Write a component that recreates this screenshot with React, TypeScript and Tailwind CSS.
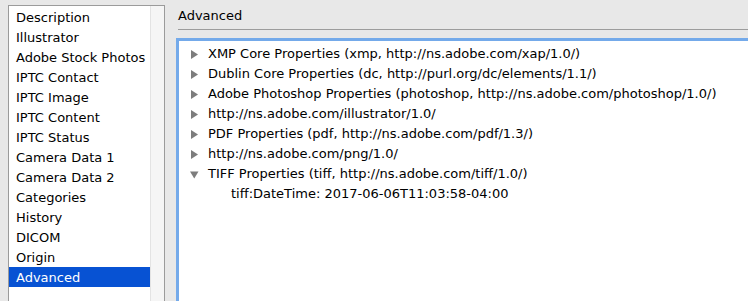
import { ReactNode } from 'react'

const categories = [
  'Description',
  'Illustrator',
  'Adobe Stock Photos',
  'IPTC Contact',
  'IPTC Image',
  'IPTC Content',
  'IPTC Status',
  'Camera Data 1',
  'Camera Data 2',
  'Categories',
  'History',
  'DICOM',
  'Origin',
  'Advanced',
]

const schemas = [
  { label: 'XMP Core Properties (xmp, http://ns.adobe.com/xap/1.0/)' },
  { label: 'Dublin Core Properties (dc, http://purl.org/dc/elements/1.1/)' },
  { label: 'Adobe Photoshop Properties (photoshop, http://ns.adobe.com/photoshop/1.0/)' },
  { label: 'http://ns.adobe.com/illustrator/1.0/' },
  { label: 'PDF Properties (pdf, http://ns.adobe.com/pdf/1.3/)' },
  { label: 'http://ns.adobe.com/png/1.0/' },
  {
    label: 'TIFF Properties (tiff, http://ns.adobe.com/tiff/1.0/)',
    open: true,
    children: ['tiff:DateTime: 2017-06-06T11:03:58-04:00'],
  },
]

function Disclosure({ open }: { open?: boolean }) {
  return (
    <svg width="9" height="9" viewBox="0 0 9 9" className="shrink-0">
      {open ? (
        <path d="M0 1.5h8.5L4.25 8.5z" fill="#7d7d7d" />
      ) : (
        <path d="M1 0v9l7-4.5z" fill="#7d7d7d" />
      )}
    </svg>
  )
}

function Row({ children, className = '' }: { children: ReactNode; className?: string }) {
  return <div className={`flex h-5 items-center whitespace-nowrap ${className}`}>{children}</div>
}

export default function App() {
  const selected = 'Advanced'

  return (
    <div
      className="flex h-[301px] w-[748px] overflow-hidden bg-[#e8e8e8] text-[13px] text-black"
      style={{ fontFamily: '"DejaVu Sans", "Liberation Sans", sans-serif' }}
    >
      <div className="ml-[8px] mt-[5px] flex w-[157px] shrink-0 border border-b-0 border-[#9b9b9b] bg-white">
        <div className="w-[141px] pt-[1px]">
          {categories.map((c) => (
            <Row
              key={c}
              className={
                c === selected
                  ? 'bg-[#0752d3] pl-[7px] pt-[2px] text-white'
                  : 'pl-[7px] pt-[2px]'
              }
            >
              {c}
            </Row>
          ))}
        </div>
        <div className="flex-1 border-l border-[#e3e3e3] bg-[#f5f5f5]" />
      </div>

      <div className="ml-[11px] flex min-w-0 flex-1 flex-col">
        <div className="flex h-[28px] items-end pl-[2px] pb-[3px]">Advanced</div>
        <div className="ml-[2px] mt-[1px] h-px bg-[#9c9c9c]" />
        <div className="mt-[8px] flex-1 border-l-[3px] border-t-[3px] border-[#74aaea] bg-white pl-[11px] pt-[2px]">
          {schemas.map((s) => (
            <div key={s.label}>
              <Row className="gap-[9px] pt-[2px]">
                <Disclosure open={s.open} />
                <span>{s.label}</span>
              </Row>
              {s.open &&
                s.children?.map((ch) => (
                  <Row key={ch} className="pl-[41px] pt-[2px]">
                    {ch}
                  </Row>
                ))}
            </div>
          ))}
        </div>
      </div>
    </div>
  )
}
